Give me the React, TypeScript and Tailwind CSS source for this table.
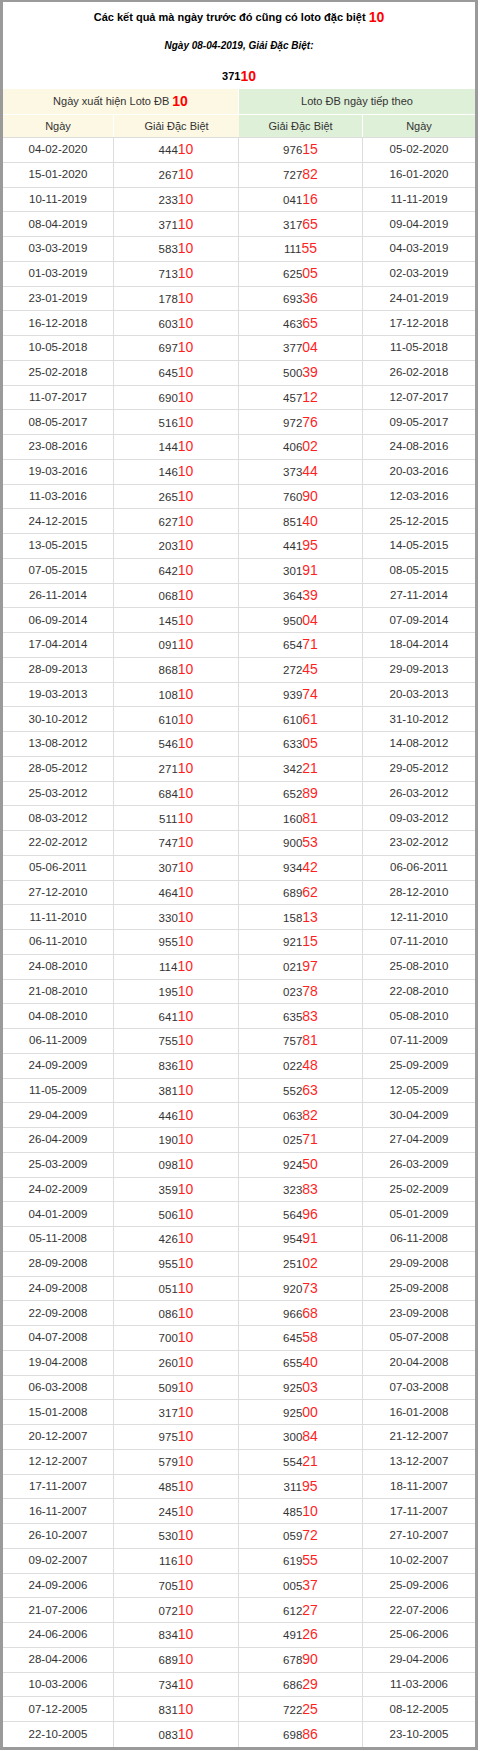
import React from 'react';

// ngày | giải ĐB | giải ĐB ngày sau | ngày sau
const rows: string[] = [
  '04-02-2020|44410|97615|05-02-2020',
  '15-01-2020|26710|72782|16-01-2020',
  '10-11-2019|23310|04116|11-11-2019',
  '08-04-2019|37110|31765|09-04-2019',
  '03-03-2019|58310|11155|04-03-2019',
  '01-03-2019|71310|62505|02-03-2019',
  '23-01-2019|17810|69336|24-01-2019',
  '16-12-2018|60310|46365|17-12-2018',
  '10-05-2018|69710|37704|11-05-2018',
  '25-02-2018|64510|50039|26-02-2018',
  '11-07-2017|69010|45712|12-07-2017',
  '08-05-2017|51610|97276|09-05-2017',
  '23-08-2016|14410|40602|24-08-2016',
  '19-03-2016|14610|37344|20-03-2016',
  '11-03-2016|26510|76090|12-03-2016',
  '24-12-2015|62710|85140|25-12-2015',
  '13-05-2015|20310|44195|14-05-2015',
  '07-05-2015|64210|30191|08-05-2015',
  '26-11-2014|06810|36439|27-11-2014',
  '06-09-2014|14510|95004|07-09-2014',
  '17-04-2014|09110|65471|18-04-2014',
  '28-09-2013|86810|27245|29-09-2013',
  '19-03-2013|10810|93974|20-03-2013',
  '30-10-2012|61010|61061|31-10-2012',
  '13-08-2012|54610|63305|14-08-2012',
  '28-05-2012|27110|34221|29-05-2012',
  '25-03-2012|68410|65289|26-03-2012',
  '08-03-2012|51110|16081|09-03-2012',
  '22-02-2012|74710|90053|23-02-2012',
  '05-06-2011|30710|93442|06-06-2011',
  '27-12-2010|46410|68962|28-12-2010',
  '11-11-2010|33010|15813|12-11-2010',
  '06-11-2010|95510|92115|07-11-2010',
  '24-08-2010|11410|02197|25-08-2010',
  '21-08-2010|19510|02378|22-08-2010',
  '04-08-2010|64110|63583|05-08-2010',
  '06-11-2009|75510|75781|07-11-2009',
  '24-09-2009|83610|02248|25-09-2009',
  '11-05-2009|38110|55263|12-05-2009',
  '29-04-2009|44610|06382|30-04-2009',
  '26-04-2009|19010|02571|27-04-2009',
  '25-03-2009|09810|92450|26-03-2009',
  '24-02-2009|35910|32383|25-02-2009',
  '04-01-2009|50610|56496|05-01-2009',
  '05-11-2008|42610|95491|06-11-2008',
  '28-09-2008|95510|25102|29-09-2008',
  '24-09-2008|05110|92073|25-09-2008',
  '22-09-2008|08610|96668|23-09-2008',
  '04-07-2008|70010|64558|05-07-2008',
  '19-04-2008|26010|65540|20-04-2008',
  '06-03-2008|50910|92503|07-03-2008',
  '15-01-2008|31710|92500|16-01-2008',
  '20-12-2007|97510|30084|21-12-2007',
  '12-12-2007|57910|55421|13-12-2007',
  '17-11-2007|48510|31195|18-11-2007',
  '16-11-2007|24510|48510|17-11-2007',
  '26-10-2007|53010|05972|27-10-2007',
  '09-02-2007|11610|61955|10-02-2007',
  '24-09-2006|70510|00537|25-09-2006',
  '21-07-2006|07210|61227|22-07-2006',
  '24-06-2006|83410|49126|25-06-2006',
  '28-04-2006|68910|67890|29-04-2006',
  '10-03-2006|73410|68629|11-03-2006',
  '07-12-2005|83110|72225|08-12-2005',
  '22-10-2005|08310|69886|23-10-2005',
];

const Prize: React.FC<{ value: string }> = ({ value }) => (
  <span>
    {value.slice(0, 3)}
    <span className="text-[14px] text-[#ff1f1f]">{value.slice(3)}</span>
  </span>
);

const cell = 'flex items-center justify-center border-r border-[#ddd]';

export default function App() {
  return (
    <div className="w-[478px] border-[3px] border-t-2 border-[#9a9a9a] bg-white font-['Liberation_Sans',Arial,sans-serif] text-[11.5px] text-[#333]">
      <div className="flex h-[29px] items-center justify-center pt-[1px] text-[11px] font-bold text-black">
        Các kết quả mà ngày trước đó cũng có loto đặc biệt&nbsp;
        <span className="text-[14px] text-[#ff0000]">10</span>
      </div>
      <div className="flex h-[29px] items-center justify-center text-[10px] font-bold italic text-black">
        Ngày 08-04-2019, Giải Đặc Biệt:
      </div>
      <div className="flex h-[29px] items-center justify-center pt-[4px] text-[11px] font-bold text-black">
        371<span className="text-[14px] text-[#ff0000]">10</span>
      </div>

      <div className="grid h-[24.5px] grid-cols-[236px_236px] text-[11px]">
        <div className="flex items-center justify-center border-r border-white bg-[#fcf8e3]">
          Ngày xuất hiện Loto ĐB&nbsp;
          <span className="text-[14px] font-bold text-[#ff0000]">10</span>
        </div>
        <div className="flex items-center justify-center bg-[#dff0d8]">Loto ĐB ngày tiếp theo</div>
      </div>
      <div className="grid h-[24.5px] grid-cols-[111px_125px_124px_112px] border-t border-white border-b border-b-[#ddd] text-[11px]">
        <div className="flex items-center justify-center border-r border-white bg-[#fcf8e3]">Ngày</div>
        <div className="flex items-center justify-center bg-[#fcf8e3]">Giải Đặc Biệt</div>
        <div className="flex items-center justify-center border-r border-white bg-[#dff0d8]">Giải Đặc Biệt</div>
        <div className="flex items-center justify-center bg-[#dff0d8]">Ngày</div>
      </div>

      {rows.map((r) => {
        const [d1, p1, p2, d2] = r.split('|');
        return (
          <div key={d1} className="grid h-[24.75px] grid-cols-[111px_125px_124px_112px] border-b border-[#ddd] last:border-b-0">
            <div className={cell}>{d1}</div>
            <div className={cell}>
              <Prize value={p1} />
            </div>
            <div className={cell}>
              <Prize value={p2} />
            </div>
            <div className="flex items-center justify-center">{d2}</div>
          </div>
        );
      })}
    </div>
  );
}
